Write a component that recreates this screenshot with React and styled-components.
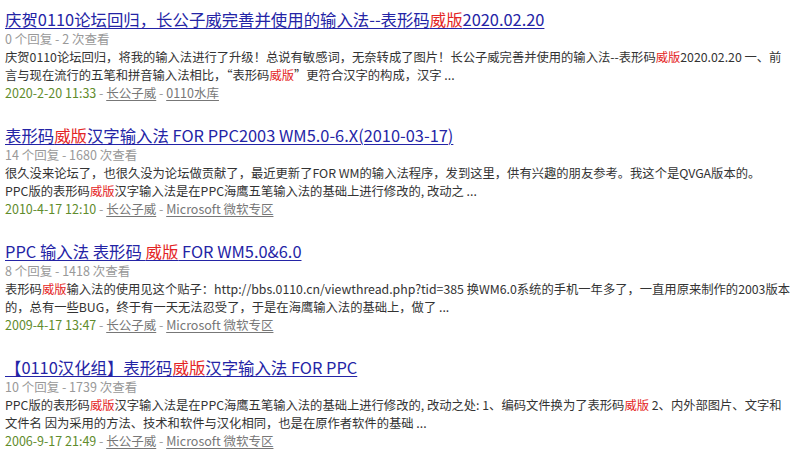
import React from "react";
import styled, { createGlobalStyle } from "styled-components";

const Global = createGlobalStyle`
  html, body { margin: 0; padding: 0; background: #fff; }
  body { font-family: "Noto Sans CJK SC", "Noto Sans", sans-serif; }
`;

const List = styled.ul`
  list-style: none;
  margin: 0;
  padding: 8px 5px 0 5px;
  display: flex;
  flex-direction: column;
  gap: 23px;
`;

const Item = styled.li`
  display: flex;
  flex-direction: column;
`;

const Title = styled.h3`
  margin: 0;
  font-size: 16.4px;
  font-weight: normal;
  line-height: 22px;
  white-space: nowrap;
`;

const TitleLink = styled.a`
  color: #2424a6;
  text-decoration: underline;
  text-underline-offset: 2px;
  text-decoration-thickness: 1px;
`;

const Hl = styled.span`
  color: #e42424;
`;

const Meta = styled.p`
  margin: 0;
  font-size: 12.5px;
  line-height: 17px;
  color: #999;
`;

const Snippet = styled.p`
  margin: 0;
  padding-top: 1px;
  font-size: 12.3px;
  line-height: 18px;
  color: #333;
`;

const Line = styled.span`
  display: block;
  white-space: nowrap;
`;

const Info = styled.p`
  margin: 0;
  font-size: 12.5px;
  line-height: 17px;
  color: #999;
`;

const Date = styled.span`
  color: #5f8c2c;
`;

const InfoLink = styled.a`
  color: #777;
  text-decoration: underline;
  text-underline-offset: 2px;
`;

const items = [
  {
    title: [
      "庆贺0110论坛回归，长公子威完善并使用的输入法--表形码",
      { hl: "威版" },
      "2020.02.20",
    ],
    meta: "0 个回复 - 2 次查看",
    lines: [
      [
        "庆贺0110论坛回归，将我的输入法进行了升级！总说有敏感词，无奈转成了图片！长公子威完善并使用的输入法--表形码",
        { hl: "威版" },
        "2020.02.20 一、前",
      ],
      ["言与现在流行的五笔和拼音输入法相比，“表形码", { hl: "威版" }, "”更符合汉字的构成，汉字 ..."],
    ],
    date: "2020-2-20 11:33",
    forum: "0110水库",
  },
  {
    title: ["表形码", { hl: "威版" }, "汉字输入法 FOR PPC2003 WM5.0-6.X(2010-03-17)"],
    meta: "14 个回复 - 1680 次查看",
    lines: [
      [
        "很久没来论坛了，也很久没为论坛做贡献了，最近更新了FOR WM的输入法程序，发到这里，供有兴趣的朋友参考。我这个是QVGA版本的。",
      ],
      ["PPC版的表形码", { hl: "威版" }, "汉字输入法是在PPC海鹰五笔输入法的基础上进行修改的, 改动之 ..."],
    ],
    date: "2010-4-17 12:10",
    forum: "Microsoft 微软专区",
  },
  {
    title: ["PPC 输入法 表形码 ", { hl: "威版" }, " FOR WM5.0&6.0"],
    meta: "8 个回复 - 1418 次查看",
    lines: [
      [
        "表形码",
        { hl: "威版" },
        "输入法的使用见这个贴子：http://bbs.0110.cn/viewthread.php?tid=385 换WM6.0系统的手机一年多了，一直用原来制作的2003版本",
      ],
      ["的，总有一些BUG，终于有一天无法忍受了，于是在海鹰输入法的基础上，做了 ..."],
    ],
    date: "2009-4-17 13:47",
    forum: "Microsoft 微软专区",
  },
  {
    title: ["【0110汉化组】表形码", { hl: "威版" }, "汉字输入法 FOR PPC"],
    meta: "10 个回复 - 1739 次查看",
    lines: [
      [
        "PPC版的表形码",
        { hl: "威版" },
        "汉字输入法是在PPC海鹰五笔输入法的基础上进行修改的, 改动之处: 1、编码文件换为了表形码",
        { hl: "威版" },
        " 2、内外部图片、文字和",
      ],
      ["文件名 因为采用的方法、技术和软件与汉化相同，也是在原作者软件的基础 ..."],
    ],
    date: "2006-9-17 21:49",
    forum: "Microsoft 微软专区",
  },
];

const renderParts = (parts) =>
  parts.map((p, i) =>
    typeof p === "string" ? <React.Fragment key={i}>{p}</React.Fragment> : <Hl key={i}>{p.hl}</Hl>
  );

export default function App() {
  return (
    <>
      <Global />
      <List>
        {items.map((it, idx) => (
          <Item key={idx}>
            <Title>
              <TitleLink href="#">{renderParts(it.title)}</TitleLink>
            </Title>
            <Meta>{it.meta}</Meta>
            <Snippet>
              {it.lines.map((l, i) => (
                <Line key={i}>{renderParts(l)}</Line>
              ))}
            </Snippet>
            <Info>
              <Date>{it.date}</Date> - <InfoLink href="#">长公子威</InfoLink> -{" "}
              <InfoLink href="#">{it.forum}</InfoLink>
            </Info>
          </Item>
        ))}
      </List>
    </>
  );
}
